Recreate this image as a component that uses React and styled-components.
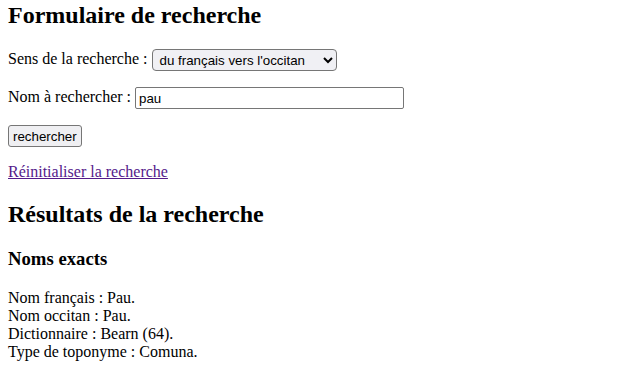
import React from 'react';
import styled, { createGlobalStyle } from 'styled-components';

const GlobalStyle = createGlobalStyle`
  body {
    margin: 0;
    background: #ffffff;
    color: #000000;
    font-family: "Liberation Serif", "Times New Roman", serif;
    font-size: 16px;
  }
`;

const Page = styled.main`
  padding: 2px 8px 0;
`;

const Title = styled.h2`
  font-size: 24px;
  font-weight: bold;
  margin: ${(p) => (p.$first ? '0' : '20px')} 0 20px;
`;

const SubTitle = styled.h3`
  font-size: 18.72px;
  font-weight: bold;
  margin: 19px 0;
`;

const Field = styled.p`
  margin: 16px 0;
`;

const Control = `
  font-family: "Liberation Sans", Arial, sans-serif;
  font-size: 13.333px;
  color: #000;
  box-sizing: border-box;
  vertical-align: middle;
`;

const Select = styled.select`
  ${Control}
  width: 185px;
  height: 22px;
  margin-left: 1px;
  padding: 0 2px;
  border: 1px solid #767676;
  border-radius: 4px;
  background: #f0f0f4;
`;

const TextInput = styled.input`
  ${Control}
  width: 269px;
  height: 22px;
  padding: 1px 3px;
  border: 1px solid #767676;
  border-radius: 2px;
`;

const Button = styled.button`
  ${Control}
  height: 22px;
  padding: 1px 4px;
  border: 1px solid #767676;
  border-radius: 3px;
  background: #efeff2;
  white-space: nowrap;
`;

const ResetLink = styled.a`
  color: #551a8b;
  text-decoration: underline;
`;

const Results = styled.p`
  margin: 16px 0;
  line-height: 18px;
`;

export default function App() {
  return (
    <Page>
      <GlobalStyle />
      <Title $first>Formulaire de recherche</Title>
      <form onSubmit={(e) => e.preventDefault()}>
        <Field>
          Sens de la recherche :{' '}
          <Select defaultValue="fr-oc">
            <option value="fr-oc">du français vers l'occitan</option>
            <option value="oc-fr">de l'occitan vers le français</option>
          </Select>
        </Field>
        <Field>
          Nom à rechercher : <TextInput type="text" defaultValue="pau" />
        </Field>
        <Field>
          <Button type="submit">rechercher</Button>
        </Field>
        <Field>
          <ResetLink href="#">Réinitialiser la recherche</ResetLink>
        </Field>
      </form>
      <Title>Résultats de la recherche</Title>
      <SubTitle>Noms exacts</SubTitle>
      <Results>
        Nom français : Pau.<br />
        Nom occitan : Pau.<br />
        Dictionnaire : Bearn (64).<br />
        Type de toponyme : Comuna.
      </Results>
    </Page>
  );
}
